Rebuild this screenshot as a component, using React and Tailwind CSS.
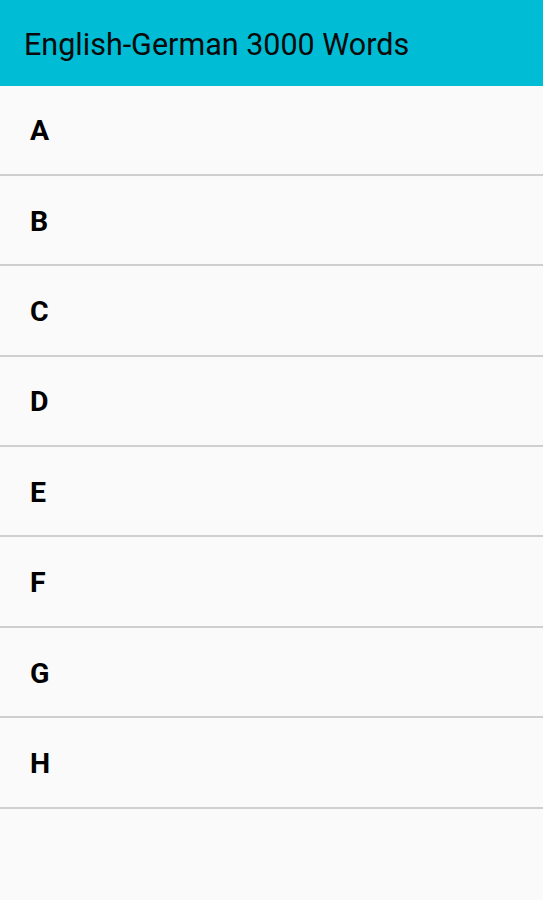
const letters = ['A', 'B', 'C', 'D', 'E', 'F', 'G', 'H']

export default function App() {
  return (
    <div className="min-h-[900px] bg-[#fafafa]" style={{ fontFamily: 'Roboto, "Liberation Sans", sans-serif' }}>
      <div className="h-[85.5px] bg-[#00bcd4] flex items-center px-[24px] pt-[5px]">
        <h1 className="text-[30.5px] text-[#0a0a0a]">English-German 3000 Words</h1>
      </div>
      <ul>
        {letters.map((l) => (
          <li key={l} className="h-[90.4px] border-b-2 border-[#cfcfcf] flex items-center px-[30px] pt-[4px]">
            <span className="text-[28.5px] font-bold text-black">{l}</span>
          </li>
        ))}
      </ul>
    </div>
  )
}
